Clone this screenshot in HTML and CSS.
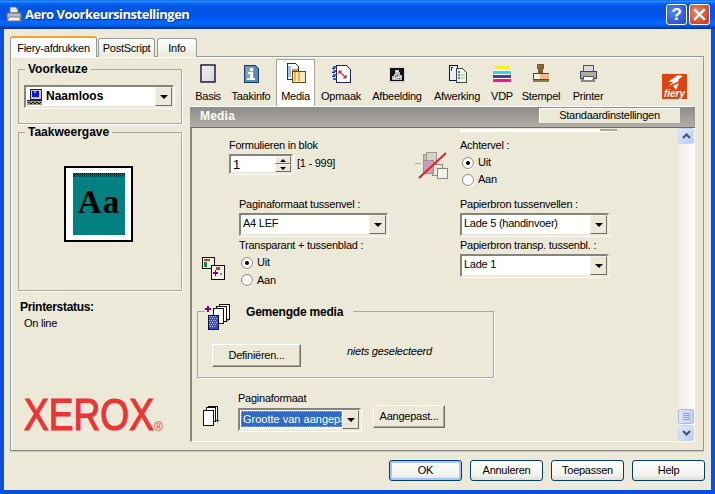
FILE: index.html
```html
<!DOCTYPE html>
<html lang="nl">
<head>
<meta charset="utf-8">
<title>Aero Voorkeursinstellingen</title>
<link rel="stylesheet" href="styles.css">
</head>
<body>
<div class="window">
  <header class="titlebar">
    <svg class="title-icon" width="16" height="17" viewBox="0 0 16 17"><path d="M4 1h6l2 3v3H4z" fill="#e8e8e8" stroke="#777"/><path d="M1 7h14v6H1z" fill="#b8bcc0" stroke="#666"/><path d="M3 11h10l2 4H1z" fill="#f4f4f4" stroke="#777"/></svg>
    <span class="title-text">Aero Voorkeursinstellingen</span>
    <span class="cap-btn cap-help">?</span>
    <span class="cap-btn cap-close"><svg width="13" height="13" viewBox="0 0 13 13"><path d="M2 2l9 9M11 2l-9 9" stroke="#fff" stroke-width="2.4" stroke-linecap="square"/></svg></span>
  </header>
  <div class="client">
    <nav class="tabs">
      <span class="tab tab-active">Fiery-afdrukken</span>
      <span class="tab tab-ps">PostScript</span>
      <span class="tab tab-info">Info</span>
    </nav>
    <div class="tabpanel">
      <aside class="sidebar">
        <section class="group group-preset">
          <div class="legend legend-side">Voorkeuze</div>
          <div class="combo combo-preset">
            <span class="combo-value value-bold">
              <svg width="16" height="18" viewBox="0 0 16 18" shape-rendering="crispEdges"><path d="M3 1h11v10H3z" fill="#c8c8c8" stroke="#222"/><path d="M5 3h7v6H5z" fill="#1010e0"/><path d="M7 3h2v2H7z" fill="#18c8f0"/><path d="M0 13h15v4H0z" fill="#9a9a8a"/><path d="M1 14h2v1H1zM5 14h2v1H5zM9 14h2v1H9zM13 14h1v1h-1zM3 15h2v1H3zM7 15h2v1H7zM11 15h2v1h-2z" fill="#111"/><path d="M0 12h15v1H0z" fill="#222"/></svg>
              Naamloos
            </span>
            <span class="combo-btn"></span>
          </div>
        </section>
        <section class="group group-view">
          <div class="legend legend-side">Taakweergave</div>
          <div class="sheet">
            <div class="sheet-page">
              <div class="sheet-dither"></div>
              <div class="sheet-text">Aa</div>
            </div>
          </div>
        </section>
        <div class="status-title">Printerstatus:</div>
        <div class="status-value">On line</div>
        <div class="xerox"><span class="xerox-word">XEROX</span><span class="xerox-reg">®</span></div>
      </aside>
      <main class="mainarea">
        <div class="iconbar">
          <div class="itab itab-basis">
            <svg width="16" height="19" viewBox="0 0 16 19"><defs><linearGradient id="pg" x1="0" y1="0" x2="1" y2="1"><stop offset="0" stop-color="#f4f4f4"/><stop offset="1" stop-color="#d4d4d4"/></linearGradient></defs><rect x="1" y="1" width="14" height="17" fill="url(#pg)" stroke="#10103a" stroke-width="1.4"/></svg>
            <span>Basis</span>
          </div>
          <div class="itab itab-info">
            <svg width="16" height="19" viewBox="0 0 16 19" shape-rendering="crispEdges"><path d="M1 1h11l3 3v14H1z" fill="#5a8ab8" stroke="#1c3c68"/><path d="M3 3h8v13H3z" fill="#7aa4c8"/><path d="M7 4h3v3H7zM5 8h5v6h2v2H4v-2h3v-4H5z" fill="#fff"/></svg>
            <span>Taakinfo</span>
          </div>
          <div class="itab itab-media">
            <svg width="20" height="20" viewBox="0 0 20 20" shape-rendering="crispEdges"><path d="M1 0h8l3 3v13H1z" fill="#fff" stroke="#333"/><path d="M2 3h3v11H2z" fill="#a8c0e8"/><path d="M6 8h13v11H6z" fill="#f6e8c0" stroke="#5a4a20"/><path d="M8 9h2v9H8zM12 9h2v9h-2z" fill="#f0b050"/><path d="M6 6h6v2H6z" fill="#c89040"/></svg>
            <span>Media</span>
          </div>
          <div class="itab itab-layout">
            <svg width="19" height="19" viewBox="0 0 19 19" shape-rendering="crispEdges"><path d="M4 1h10l4 4v13H4z" fill="#fff" stroke="#22225a"/><path d="M1 2h3v2H1zM1 6h3v2H1zM1 10h3v2H1zM1 14h3v2H1z" fill="#1a70e8"/><path d="M0 4h3v1H0zM0 8h3v1H0zM0 12h3v1H0z" fill="#2020a0"/><path d="M7 7l7 7M7 7h3M7 7v3M14 14h-3M14 14v-3" stroke="#d82030" fill="none" shape-rendering="auto" stroke-width="1.2"/></svg>
            <span>Opmaak</span>
          </div>
          <div class="itab itab-image">
            <svg width="16" height="16" viewBox="0 0 16 16" shape-rendering="crispEdges"><rect width="16" height="16" fill="#d8d8d8"/><rect x="1" y="1" width="14" height="13" fill="#111"/><path d="M6 3h4v2h1v3h2v5H3V9h2V7h1zM7 5h1v1H7zM9 7h1v1H9z" fill="#bbb"/><path d="M7 4h2v1H7zM5 9h2v1H5zM9 10h2v1H9zM7 11h1v1H7zM4 11h2v1H4zM11 9h1v1h-1z" fill="#fff"/><path d="M6 9h1v1H6zM8 8h1v1H8zM10 11h1v1h-1z" fill="#333"/></svg>
            <span>Afbeelding</span>
          </div>
          <div class="itab itab-finish">
            <svg width="19" height="19" viewBox="0 0 19 19" shape-rendering="crispEdges"><path d="M1 1h8v15H1z" fill="#e8f0ff" stroke="#10104a"/><path d="M3 3h1v4H3zM4 3h1v1H4z" fill="#1a3cb0"/><path d="M8 4h6l4 4v10H8z" fill="#f4f8ee" stroke="#3a4a3a"/><path d="M10 7h2v2h-2zM10 10h2v2h-2zM10 13h2v2h-2z" fill="#4a9a60"/><path d="M13 10h4v2h-4zM13 13h4v2h-4z" fill="#b8e0c0"/></svg>
            <span>Afwerking</span>
          </div>
          <div class="itab itab-vdp">
            <svg width="18" height="17" viewBox="0 0 18 17" shape-rendering="crispEdges"><path d="M3 0h12l3 2v15H0V2z" fill="#e8e8e0"/><path d="M2 1h14v3H2z" fill="#f8f020"/><path d="M0 6h18v3H0z" fill="#30d8d8"/><path d="M0 10h18v3H0z" fill="#503898"/><path d="M0 14h18v3H0z" fill="#f01890"/><path d="M0 5h18v1H0zM0 9h18v1H0zM0 13h18v1H0z" fill="#fff"/></svg>
            <span>VDP</span>
          </div>
          <div class="itab itab-stamp">
            <svg width="18" height="19" viewBox="0 0 18 19" shape-rendering="crispEdges"><path d="M5 0h7v5h-1v4H6V5H5z" fill="#8a5a24"/><path d="M6 1h3v3H6z" fill="#6a7a50"/><path d="M1 9h16v7H1z" fill="#5a4a28"/><path d="M2 10h6v5H2z" fill="#fff8e0"/><path d="M8 10h4v5H8z" fill="#e8c090"/><path d="M12 10h5v5h-5z" fill="#f4b888"/><path d="M1 16h16v2H1z" fill="#8a7a50"/></svg>
            <span>Stempel</span>
          </div>
          <div class="itab itab-printer">
            <svg width="18" height="18" viewBox="0 0 18 18" shape-rendering="crispEdges"><path d="M4 0h10v7H4z" fill="#d8dce0" stroke="#555"/><path d="M1 6h16v7H1z" fill="#a8acb4" stroke="#444"/><path d="M4 11h10v5H4z" fill="#fff" stroke="#555"/><path d="M2 14h14v3H2z" fill="#88888a"/><path d="M5 13h8v2H5z" fill="#fff"/><path d="M11 9h2v1h-2z" fill="#e8d020"/></svg>
            <span>Printer</span>
          </div>
          <div class="fiery">
            <svg width="17" height="15" viewBox="0 0 17 15"><path d="M12 0L2 7h5L3 11l10-5-1-1 5-4z M7 11l6-3-3 7z" fill="#fff"/></svg>
            <span class="fiery-word">fiery</span>
          </div>
        </div>
        <div class="panel">
          <div class="panel-head">
            <span class="panel-title">Media</span>
            <span class="btn btn-default-settings">Standaardinstellingen</span>
          </div>
          <div class="panel-body">
            <div class="scrollarea">
              <div class="clipped-combo"><span class="clipped-btn"></span></div>
              <div class="row-a">
                <div class="col-forms">
                  <div class="lbl">Formulieren in blok</div>
                  <div class="spin-row">
                    <div class="spin">
                      <span class="spin-value">1</span>
                      <span class="spin-btns"><i class="spin-up"></i><i class="spin-down"></i></span>
                    </div>
                    <span class="spin-range">[1 - 999]</span>
                  </div>
                </div>
                <div class="col-noback">
                  <svg width="33" height="27" viewBox="0 0 33 27"><g shape-rendering="crispEdges"><path d="M0 11h6v1H0z" fill="#a8a8e0"/><path d="M8 2h10v15H8z" fill="#c0c0b4" stroke="#9a9a90"/><path d="M11 0h10v14H11z" fill="#d4d2c6" stroke="#9a9a90"/><path d="M17 12h10v11H17z" fill="#ece9d8" stroke="#8a8a80"/><path d="M22 16h10v10H22z" fill="#f4f2e8" stroke="#8a8a80"/><path d="M8 8h10v13H8z" fill="#c8a0bc" stroke="#a88aa0"/></g><path d="M4 26L31 1" stroke="#e02020" stroke-width="2"/></svg>
                </div>
                <div class="col-back">
                  <div class="lbl">Achtervel :</div>
                  <div class="radios">
                    <label class="radio"><i class="dot on"></i>Uit</label>
                    <label class="radio"><i class="dot"></i>Aan</label>
                  </div>
                </div>
              </div>
              <div class="row-b">
                <div class="col-sep">
                  <div class="sep-icon">
                    <svg width="23" height="23" viewBox="0 0 23 23" shape-rendering="crispEdges"><path d="M0 0h12v11H0z" fill="#f4f2e4" stroke="#111"/><path d="M2 2h6v2H2z" fill="#e83020"/><path d="M2 5h3v5H2z" fill="#109030"/><path d="M9 8h13v14H9z" fill="#f4f2e4" stroke="#111"/><path d="M14 10h4v3h-4z" fill="#e83020"/><path d="M11 15h5v2h-5zM13 13h1v6h-1z" fill="#800080"/><path d="M18 16h2v2h-2z" fill="#888"/></svg>
                  </div>
                  <div class="sep-fields">
                    <div class="lbl">Paginaformaat tussenvel :</div>
                    <div class="combo combo-wide"><span class="combo-value">A4 LEF</span><span class="combo-btn"></span></div>
                    <div class="lbl lbl-next">Transparant + tussenblad :</div>
                    <div class="radios radios-tr">
                      <label class="radio"><i class="dot on"></i>Uit</label>
                      <label class="radio radio-tall"><i class="dot"></i>Aan</label>
                    </div>
                  </div>
                </div>
                <div class="col-source">
                  <div class="lbl">Papierbron tussenvellen :</div>
                  <div class="combo combo-wide"><span class="combo-value">Lade 5 (handinvoer)</span><span class="combo-btn"></span></div>
                  <div class="lbl lbl-next">Papierbron transp. tussenbl. :</div>
                  <div class="combo combo-wide"><span class="combo-value">Lade 1</span><span class="combo-btn"></span></div>
                </div>
              </div>
              <section class="group group-mixed">
                <div class="legend-mixed">
                  <svg width="27" height="27" viewBox="0 0 27 27" shape-rendering="crispEdges"><path d="M0 3h2v2h2v2H2v2H0V7h-2V5h2z" fill="#800080" transform="translate(2 0)"/><path d="M22 16h3l-3 4zM10 24h3l-3 3z" fill="#999"/><path d="M14 1h10v15H14z" fill="#fff" stroke="#111"/><path d="M11 3h10v15H11z" fill="#fff" stroke="#111"/><path d="M8 5h10v15H8z" fill="#fff" stroke="#111"/><path d="M3 12h10v14H3z" fill="#3048e0" stroke="#111"/><path d="M4 13h1v1H4zM6 13h1v1H6zM8 13h1v1H8zM10 13h1v1h-1zM5 15h1v1H5zM7 15h1v1H7zM9 15h1v1H9zM11 15h1v1h-1zM4 17h1v1H4zM6 17h1v1H6zM8 17h1v1H8zM10 17h1v1h-1zM5 19h1v1H5zM7 19h1v1H7zM9 19h1v1H9zM11 19h1v1h-1zM4 21h1v1H4zM6 21h1v1H6zM8 21h1v1H8zM10 21h1v1h-1zM5 23h1v1H5zM7 23h1v1H7zM9 23h1v1H9z" fill="#c8d0ff"/></svg>
                  <span class="legend-mixed-text">Gemengde media</span>
                </div>
                <div class="mixed-row">
                  <span class="btn btn-define">Definiëren...</span>
                  <em class="mixed-note">niets geselecteerd</em>
                </div>
              </section>
              <div class="row-size">
                <svg class="size-icon" width="18" height="21" viewBox="0 0 18 21" shape-rendering="crispEdges"><path d="M15 15h3l-3 4z" fill="#999"/><path d="M6 1h9v14H6z" fill="#fff" stroke="#111"/><path d="M4 2.500h9v14H4z" fill="#fff" stroke="#111"/><path d="M1 5h10v15H1z" fill="#fff" stroke="#111"/></svg>
                <div class="size-fields">
                  <div class="lbl">Paginaformaat</div>
                  <div class="size-controls">
                    <div class="combo combo-size"><span class="combo-value value-selected"><span class="value-clip">Grootte van aangepast</span></span><span class="combo-btn"></span></div>
                    <span class="btn btn-custom">Aangepast...</span>
                  </div>
                </div>
              </div>
            </div>
            <div class="scrollbar">
              <span class="sb-btn"><svg width="9" height="6" viewBox="0 0 9 6"><path d="M1 5l3.500-3.500L8 5" fill="none" stroke="#3a4e7a" stroke-width="2"/></svg></span>
              <span class="sb-track"></span>
              <span class="sb-thumb"><svg width="7" height="7" viewBox="0 0 7 7" shape-rendering="crispEdges"><path d="M0 0h7v1H0zM0 2h7v1H0zM0 4h7v1H0zM0 6h7v1H0z" fill="#8aa6e0"/></svg></span>
              <span class="sb-btn sb-down"><svg width="9" height="6" viewBox="0 0 9 6"><path d="M1 1l3.500 3.500L8 1" fill="none" stroke="#3a4e7a" stroke-width="2"/></svg></span>
            </div>
          </div>
        </div>
      </main>
    </div>
    <footer class="actions">
      <span class="xpbtn xpbtn-focus">OK</span>
      <span class="xpbtn">Annuleren</span>
      <span class="xpbtn">Toepassen</span>
      <span class="xpbtn">Help</span>
    </footer>
  </div>
</div>
</body>
</html>
```
FILE: styles.css
```css
* { box-sizing: border-box; }
html, body { margin: 0; padding: 0; width: 715px; height: 494px; overflow: hidden; }
body { font: 11px/13px "Liberation Sans", Arial, sans-serif; letter-spacing: -0.25px; color: #000; background: #0a4fe0; }
.window { width: 715px; height: 494px; display: flex; flex-direction: column; }

.titlebar {
  height: 29px; flex: none; display: flex; align-items: center; padding: 0 5px 1px 6px; color: #fff;
  background: linear-gradient(180deg,#0058ee 0%,#3593ff 4%,#288eff 6%,#127dff 8%,#036ffc 10%,#0262ee 14%,#0057e5 20%,#0054e3 24%,#0055eb 56%,#005bf5 66%,#026afe 76%,#0062ef 86%,#0052d6 92%,#0040ab 94%,#003092 100%);
}
.title-icon { flex: none; margin-right: 3px; }
.title-text { font: bold 13px/16px "Open Sans", "Liberation Sans", sans-serif; flex: 1; text-shadow: 1px 1px 0 #0f2f90; letter-spacing: -0.5px; }
.cap-btn { width: 21px; height: 21px; margin-left: 2px; border: 1px solid #fff; border-radius: 3px; display: flex; align-items: center; justify-content: center; color: #fff; font: bold 17px/19px "Liberation Sans", sans-serif; }
.cap-help { background: radial-gradient(circle at 35% 35%, #5a86ee, #2a50d0 80%); }
.cap-close { background: radial-gradient(circle at 35% 35%, #e8866a, #d0401c 80%); }

.client { flex: 1; margin: 0 4px 4px; background: #ece9d8; padding: 8px 7px 0 6px; display: flex; flex-direction: column; border-bottom: 0; }

.tabs { display: flex; align-items: flex-end; height: 20px; position: relative; z-index: 1; margin-bottom: -1px; flex: none; }
.tab { height: 19px; padding-top: 3px; text-align: center; margin-left: 1px; border: 1px solid #919b9c; border-bottom: 0; border-radius: 3px 3px 0 0; background: linear-gradient(180deg,#fff,#ece9d8); }
.tab-active { width: 87px; height: 21px; margin-left: 0; padding-top: 4px; background: #fcfcfe; border-top: 2px solid #f5a623; border-color: #f5a623 #919b9c transparent #919b9c; }
.tab-ps { width: 57px; }
.tab-info { width: 40px; margin-left: 2px; }

.tabpanel { height: 395px; flex: none; display: flex; border: 1px solid #919b9c; border-bottom-color: #8a8a84; box-shadow: inset 1px 1px 0 #fff, 0 1px 0 #c8c6b8; padding: 0 8px 8px 7px; }

.sidebar { width: 172px; flex: none; padding-top: 12px; }
.group { border: 1px solid #aca899; box-shadow: 1px 1px 0 #fff; }
.legend { width: fit-content; background: #ece9d8; margin-left: 6px; padding: 0 3px; font-weight: bold; font-size: 12px; line-height: 14px; margin-top: -8px; letter-spacing: 0; }
.group-preset { width: 164px; height: 55px; }
.group-view { width: 164px; height: 159px; margin-top: 8px; }
.combo-preset { margin: 9px 0 0 5px; width: 150px; }
.sheet { width: 69px; height: 76px; margin: 27px 0 0 45px; background: #fff; border: 2px solid #000; padding: 5px 6px 0 7px; }
.sheet-page { height: 62px; background: #008080; }
.sheet-dither { height: 4px; background-image: conic-gradient(#000 25%, #008080 0 50%, #000 0 75%, #008080 0); background-size: 2px 2px; }
.sheet-text { font: bold 33px/38px "Liberation Serif", serif; color: #000; text-align: center; padding-top: 6px; letter-spacing: 1px; }
.status-title { font-weight: bold; font-size: 12px; margin: 10px 0 0 2px; letter-spacing: -0.3px; }
.status-value { margin: 3px 0 0 6px; }
.xerox { margin: 67px 0 0 6px; height: 36px; display: flex; align-items: flex-end; color: #ee3333; white-space: nowrap; }
.xerox-word { font: 45px/36px "Liberation Sans", Arial, sans-serif; display: inline-block; transform: scaleX(.825); transform-origin: 0 100%; width: 130px; -webkit-text-stroke: 1.2px #ee3333; letter-spacing: 0; }
.xerox-reg { font-size: 12px; line-height: 12px; letter-spacing: 0; }

.mainarea { flex: 1; display: flex; flex-direction: column; min-width: 0; }
.iconbar { height: 49px; flex: none; padding-top: 2px; display: grid; grid-template-columns: 36px 50px 39px 52px 60px 60px 30px 48px 46px 1fr; justify-items: center; }
.itab { width: 100%; height: 47px; display: flex; flex-direction: column; align-items: center; position: relative; text-align: center; white-space: nowrap; justify-content: flex-end; padding-bottom: 3px; }
.itab svg { position: relative; }
.itab span { display: block; margin-top: 5px; }
.itab-basis svg { top: -2px; }
.itab-info svg { top: -2px; }
.itab-media { background: #fcfcfa; border: 1px solid #aca899; border-bottom: 0; box-shadow: inset 1px 0 0 #fff; height: 47px; }
.itab-media svg { top: -2px; }
.itab-layout svg { top: -2px; }
.itab-image svg { top: -2px; }
.itab-finish svg { top: -2px; }
.itab-vdp svg { top: -3px; }
.itab-stamp svg { top: -2px; }
.itab-printer svg { top: -2px; }
.fiery { justify-self: end; margin: 15px 8px 0 0; width: 25px; height: 25px; background: #de4312; color: #fff; display: flex; flex-direction: column; align-items: center; position: relative; }
.fiery svg { margin-top: 1px; }
.fiery-word { font: italic bold 10px/8px "Liberation Sans", sans-serif; letter-spacing: 0; }

.panel { flex: 1; display: flex; flex-direction: column; min-height: 0; border-top: 1px solid #fff; }
.panel-head { height: 21px; flex: none; display: flex; align-items: flex-start; justify-content: space-between; background: linear-gradient(180deg,#8c8c88,#b0aea6); border-bottom: 1px solid #6e6c62; padding: 1px 15px 0 10px; }
.panel-title { color: #fff; font-weight: bold; font-size: 12px; line-height: 17px; letter-spacing: .2px; }
.btn-default-settings { width: 141px; height: 16px; line-height: 14px; background: #ece9d8; border-bottom: 1px solid #aca899; box-shadow: inset 1px 1px 0 #fff; text-align: center; }
.panel-body { flex: 1; display: flex; min-height: 0; border-left: 2px solid #8a887c; border-right: 1px solid #fff; border-bottom: 1px solid #fff; }
.scrollarea { width: 486px; flex: none; }

.clipped-combo { height: 4px; width: 158px; margin-left: 268px; background: #fff; border-top: 1px solid #ece9d8; display: flex; justify-content: flex-end; padding-right: 1px; }
.clipped-btn { width: 17px; height: 2px; background: #aca899; }

.row-a { display: flex; padding-top: 7px; height: 56px; }
.col-forms { width: 223px; padding-left: 37px; flex: none; }
.col-noback { width: 45px; flex: none; padding-top: 13px; }
.spin-row { display: flex; margin-top: 2px; }
.spin { width: 64px; height: 20px; background: #fff; border: 2px solid; border-color: #86847a #ece9d8 #ece9d8 #86847a; box-shadow: 1px 1px 0 #fff; display: flex; justify-content: space-between; }
.spin-value { font-size: 13px; line-height: 17px; padding-left: 2px; }
.spin-btns { width: 16px; display: flex; flex-direction: column; }
.spin-up, .spin-down { flex: 1; background: #ece9d8; border: 1px solid; border-color: #fff #716f64 #716f64 #fff; display: flex; align-items: center; justify-content: center; }
.spin-up::after { content: ""; border: 3px solid transparent; border-top: 0; border-bottom-color: #000; }
.spin-down::after { content: ""; border: 3px solid transparent; border-bottom: 0; border-top-color: #000; }
.spin-range { margin: 3px 0 0 4px; }
.radios { margin-top: 2px; }
.radio { display: flex; align-items: center; height: 17px; padding-left: 2px; }
.radio-tall { height: 18px; }
.dot { width: 12px; height: 12px; border-radius: 50%; background: #fff; border: 1px solid #8a887c; box-shadow: 1px 1px 0 #fff; margin-right: 4px; flex: none; display: flex; align-items: center; justify-content: center; }
.dot.on::after { content: ""; width: 4px; height: 4px; border-radius: 50%; background: #000; }

.row-b { display: flex; margin-top: 10px; height: 91px; }
.col-sep { width: 268px; flex: none; display: flex; }
.sep-icon { width: 47px; flex: none; padding: 59px 0 0 10px; }
.sep-fields { flex: 1; }
.lbl-next { margin-top: 3px; }
.combo { height: 23px; display: flex; background: #fff; border: 2px solid; border-color: #86847a #ece9d8 #ece9d8 #86847a; box-shadow: 1px 1px 0 #fff; }
.combo-value { flex: 1; min-width: 0; padding: 2px 0 0 2px; white-space: nowrap; overflow: hidden; display: flex; align-items: flex-start; }
.combo-btn { width: 17px; flex: none; background: #ece9d8; border: 1px solid; border-color: #f4f2e8 #716f64 #716f64 #f4f2e8; display: flex; align-items: center; justify-content: center; }
.combo-btn::after { content: ""; border: 4px solid transparent; border-bottom: 0; border-top-color: #000; }
.combo-wide { width: 149px; margin-top: 2px; }
.value-bold { font-weight: bold; font-size: 12px; letter-spacing: 0; align-items: center; gap: 3px; padding: 0 0 0 1px; }
.value-bold svg { flex: none; }

.group-mixed { width: 297px; height: 67px; margin: 22px 0 0 5px; }
.legend-mixed { display: flex; width: 148px; height: 27px; margin: -9px 0 0 7px; background: linear-gradient(#ece9d8 0 100%); gap: 14px; }
.legend-mixed svg { flex: none; }
.legend-mixed-text { font-weight: bold; font-size: 12px; line-height: 18px; letter-spacing: -0.2px; }
.mixed-row { display: flex; margin: 14px 0 0 14px; gap: 46px; }
.mixed-note { font-size: 11px; margin-top: 1px; }
.btn { display: block; }
.btn-define, .btn-custom { height: 23px; background: #ece9d8; border: 1px solid; border-color: #fff #716f64 #716f64 #fff; box-shadow: inset -1px -1px 0 #aca899; text-align: center; line-height: 20px; flex: none; }
.btn-define { width: 89px; }
.btn-custom { width: 72px; margin-top: -3px; }

.row-size { display: flex; margin-top: 14px; }
.size-icon { flex: none; margin: 13px 18px 0 10px; }
.size-controls { display: flex; margin-top: 3px; gap: 12px; }
.combo-size { width: 123px; }
.value-selected { margin: 1px 0 2px 1px; padding: 0; background: #316ac5; color: #fff; outline: 1px dotted #e8a040; outline-offset: -1px; letter-spacing: 0; }
.value-clip { display: block; padding: 2px 0 0 2px; overflow: hidden; }

.scrollbar { width: 16px; flex: none; display: flex; flex-direction: column; background: linear-gradient(90deg,#f0eee4,#fdfdfa); }
.sb-btn { height: 16px; flex: none; background: linear-gradient(135deg,#e4ecfd,#b8ccf8); border: 1px solid #c8d4f0; border-radius: 2px; display: flex; align-items: center; justify-content: center; }
.sb-track { flex: 1; }
.sb-thumb { height: 15px; flex: none; background: linear-gradient(90deg,#dce6fd,#c0d0f8); border: 1px solid #a8bce8; border-radius: 2px; display: flex; align-items: center; justify-content: center; margin-bottom: 1px; }

.actions { display: flex; justify-content: flex-end; gap: 8px; margin-top: 9px; margin-right: -1px; flex: none; }
.xpbtn { width: 73px; height: 21px; border: 1px solid #003c74; border-radius: 3px; background: linear-gradient(180deg,#fff,#f4f3ee 70%,#e2ded0); text-align: center; line-height: 19px; }
.xpbtn-focus { box-shadow: inset 0 0 0 2px #a8c4f0; }
```
